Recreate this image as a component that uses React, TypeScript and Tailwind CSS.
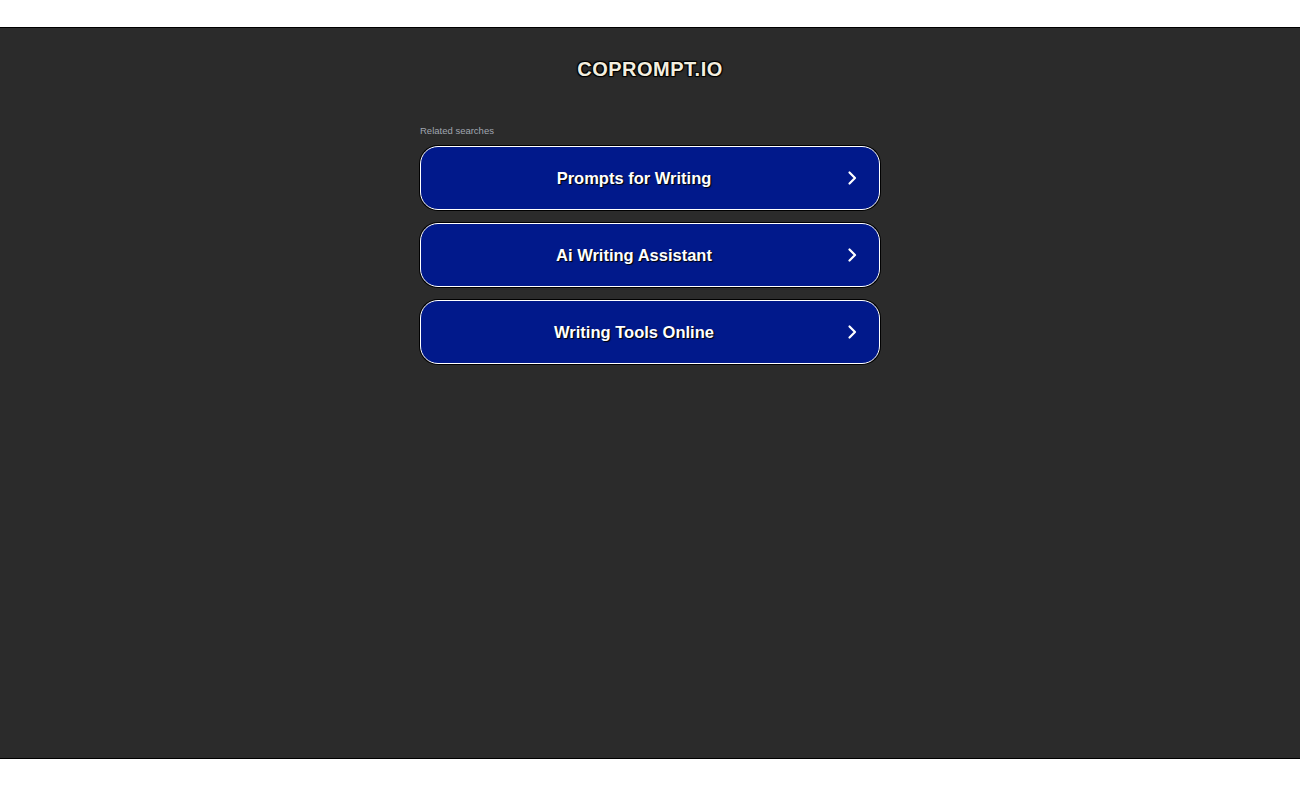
import React from "react";

const items = ["Prompts for Writing", "Ai Writing Assistant", "Writing Tools Online"];

function Chevron() {
  return (
    <svg width="12" height="16" viewBox="0 0 12 16" fill="none" className="shrink-0">
      <path d="M3.5 2.5 L9 8 L3.5 13.5" stroke="white" strokeWidth="2.2" strokeLinecap="round" strokeLinejoin="round" />
    </svg>
  );
}

export default function App() {
  return (
    <div className="w-[1300px] h-[788px] bg-white pt-[27px]" style={{ fontFamily: "Arial, 'Liberation Sans', sans-serif" }}>
      <div className="h-[732px] bg-[#2b2b2b] border-y border-black flex flex-col items-center">
        <h1
          className="mt-[29px] text-[20px] leading-[24px] font-bold text-[#f3eedf] tracking-[0.5px]"
          style={{ textShadow: "1px 1px 1px #000, -1px -1px 1px #000, 1px -1px 1px #000, -1px 1px 1px #000" }}
        >
          COPROMPT.IO
        </h1>
        <div className="w-[460px] mt-[44px]">
          <div className="text-[9.5px] leading-[12px] text-[#a0a6b0] mb-[9px]">Related searches</div>
          <div className="flex flex-col gap-[13px]">
            {items.map((t) => (
              <div
                key={t}
                className="h-[64px] rounded-[18px] bg-[#01198b] border-[1.5px] border-white shadow-[0_0_0_1px_#000] flex items-center pl-[24px] pr-[21px]"
              >
                <span
                  className="flex-1 text-center text-[16.5px] font-bold text-white"
                  style={{ textShadow: "1px 1px 1px #000" }}
                >
                  {t}
                </span>
                <span className="ml-[23px] flex">
                  <Chevron />
                </span>
              </div>
            ))}
          </div>
        </div>
      </div>
    </div>
  );
}
